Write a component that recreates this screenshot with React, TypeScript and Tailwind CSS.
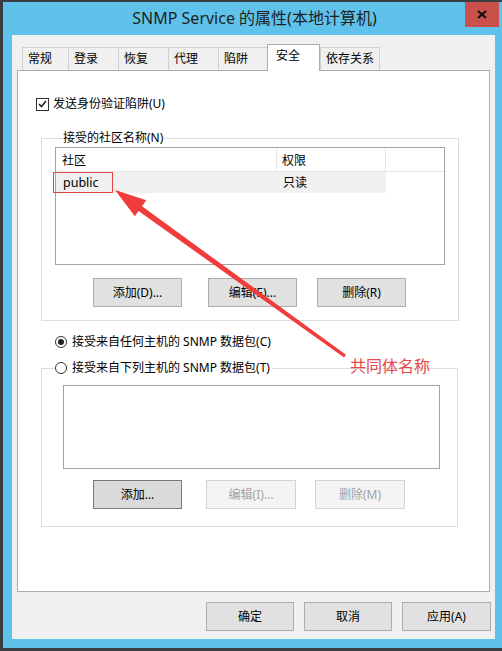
import React from "react";

const font = "font-['Noto_Sans','Noto_Sans_CJK_SC',sans-serif]";

const tabs = [
  { label: "常规", w: "w-[46px]" },
  { label: "登录", w: "w-[50px]" },
  { label: "恢复", w: "w-[50px]" },
  { label: "代理", w: "w-[50px]" },
  { label: "陷阱", w: "w-[49px]" },
  { label: "安全", w: "w-[53px]", active: true },
  { label: "依存关系", w: "w-[60px]", last: true },
];

function Btn({
  children,
  className = "",
  disabled = false,
  focused = false,
}: {
  children: React.ReactNode;
  className?: string;
  disabled?: boolean;
  focused?: boolean;
}) {
  const look = disabled
    ? "bg-[#f4f4f4] border-[#d3d3d3] text-[#a3a3a3]"
    : focused
    ? "bg-[#dadada] border-[#7a7a7a] text-black"
    : "bg-[#e1e1e1] border-[#adadad] text-black";
  return (
    <div className={`h-[29px] border flex items-center justify-center text-[12px] ${look} ${className}`}>
      {children}
    </div>
  );
}

function Radio({ checked, label }: { checked?: boolean; label: string }) {
  return (
    <div className="flex items-center h-[16px] gap-[5px]">
      <div className="w-[12px] h-[12px] rounded-full border border-[#333] bg-white flex items-center justify-center">
        {checked && <div className="w-[6px] h-[6px] rounded-full bg-[#222]" />}
      </div>
      <span className="text-[12px] leading-[16px] text-black">{label}</span>
    </div>
  );
}

export default function App() {
  return (
    <div
      className={`relative w-[502px] h-[651px] bg-[#5ec2ea] border-t-2 border-l-[3px] border-b-[3px] border-[#3a3f44] flex flex-col ${font}`}
    >
      {/* title bar */}
      <div className="relative h-[33px] flex items-center justify-center">
        <span className="text-[16px] text-[#1e1e1e] leading-none -mt-[1px] ml-[4px]">
          SNMP Service 的属性(本地计算机)
        </span>
        <div className="absolute right-[3px] top-0 w-[34px] h-[25px] bg-[#c9504b] flex items-center justify-center">
          <svg width="10" height="9" viewBox="0 0 10 9">
            <path d="M1 1 L9 8 M9 1 L1 8" stroke="#111" strokeWidth="2.2" />
          </svg>
        </div>
      </div>

      {/* client area */}
      <div className="ml-[9px] mr-[7px] h-[604px] bg-[#f0f0f0] flex flex-col">
        {/* tabs */}
        <div className="h-[35px] pl-[10px] flex items-end">
          {tabs.map((t) =>
            t.active ? (
              <div
                key={t.label}
                className={`${t.w} h-[27px] -mb-px relative z-10 bg-white border border-b-0 border-[#adadad] pl-[8px] pt-[3px] text-[12px] leading-[16px] text-black`}
              >
                {t.label}
              </div>
            ) : (
              <div
                key={t.label}
                className={`${t.w} h-[23px] bg-[#f0f0f0] border-t border-l ${t.last ? "border-r" : ""} border-[#d0d0d0] pl-[5px] pt-[3px] text-[12px] leading-[16px] text-black`}
              >
                {t.label}
              </div>
            )
          )}
        </div>

        {/* tab page */}
        <div className="mx-[5px] h-[522px] bg-white border border-[#adadad] flex flex-col">
          <div className="mt-[25px] ml-[18px] h-[16px] flex items-center gap-[4px]">
            <div className="w-[13px] h-[13px] border border-[#333] bg-white flex items-center justify-center">
              <svg width="9" height="8" viewBox="0 0 9 8">
                <path d="M1 4 L3.5 6.5 L8 1" fill="none" stroke="#222" strokeWidth="1.6" />
              </svg>
            </div>
            <span className="text-[12px] leading-[16px] text-black">发送身份验证陷阱(U)</span>
          </div>

          <fieldset className="mt-[18px] ml-[23px] w-[417px] border border-[#dcdcdc] px-[13px] pb-[13px]">
            <legend className="ml-[7px] px-[1px] text-[12px] leading-[16px] text-black">
              接受的社区名称(N)
            </legend>
            <div className="mt-[1px] w-[390px] h-[118px] border border-[#a3a3a3] bg-white">
              <div className="h-[24px] flex border-b border-[#e5e5e5]">
                <div className="w-[221px] border-r border-[#e5e5e5] pl-[6px] pt-[1px] text-[12px] leading-[23px] text-black">
                  社区
                </div>
                <div className="w-[109px] border-r border-[#e5e5e5] pl-[5px] pt-[1px] text-[12px] leading-[23px] text-black">
                  权限
                </div>
              </div>
              <div className="h-[21px] w-[330px] bg-[#f0f0f0] flex">
                <div className="w-[221px] pl-[7px] text-[12.5px] leading-[21px] text-black">public</div>
                <div className="pl-[6px] text-[12px] leading-[21px] text-black">只读</div>
              </div>
            </div>
            <div className="mt-[13px] flex">
              <Btn className="ml-[38px] w-[89px]">添加(D)...</Btn>
              <Btn className="ml-[26px] w-[89px]">编辑(E)...</Btn>
              <Btn className="ml-[20px] w-[89px]">删除(R)</Btn>
            </div>
          </fieldset>

          <div className="mt-[13px] ml-[37px]">
            <Radio checked label="接受来自任何主机的 SNMP 数据包(C)" />
          </div>

          <fieldset className="mt-[10px] ml-[23px] w-[417px] border border-[#dcdcdc] pb-[17px]">
            <legend className="ml-[13px] pr-[2px]">
              <Radio label="接受来自下列主机的 SNMP 数据包(T)" />
            </legend>
            <div className="mt-[9px] ml-[21px] w-[377px] h-[84px] border border-[#a3a3a3] bg-white" />
            <div className="mt-[11px] flex">
              <Btn focused className="ml-[51px] w-[89px]">添加...</Btn>
              <Btn disabled className="ml-[24px] w-[90px]">编辑(I)...</Btn>
              <Btn disabled className="ml-[19px] w-[90px]">删除(M)</Btn>
            </div>
          </fieldset>
        </div>

        {/* dialog buttons */}
        <div className="mt-[10px] pr-[4px] flex justify-end gap-[10px]">
          <Btn className="w-[88px] h-[27px]">确定</Btn>
          <Btn className="w-[88px] h-[27px]">取消</Btn>
          <Btn className="w-[89px] h-[27px]">应用(A)</Btn>
        </div>
      </div>

      {/* annotation overlay */}
      <div className="absolute -left-[3px] -top-[2px] w-[502px] h-[651px] pointer-events-none">
        <div className="absolute left-[53px] top-[172px] w-[60px] h-[21px] border border-[#e04848]" />
        <svg className="absolute left-0 top-0" width="502" height="651" viewBox="0 0 502 651">
          <polygon
            points="115,190 134.8,216.3 138.5,211.1 344.1,357.4 345.9,354.8 142.0,206.2 146.3,200.2"
            fill="#f03c3c"
          />
        </svg>
        <div className="absolute left-[350px] top-[358px] text-[16px] leading-none text-[#e8474c]">
          共同体名称
        </div>
      </div>
    </div>
  );
}
